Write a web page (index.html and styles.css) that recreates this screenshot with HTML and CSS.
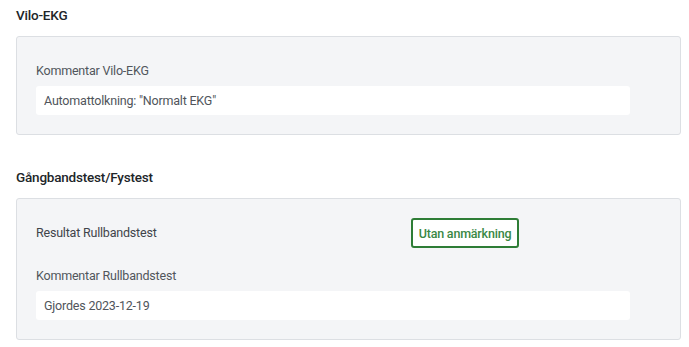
FILE: index.html
```html
<!DOCTYPE html>
<html lang="sv">
<head>
<meta charset="utf-8">
<link rel="stylesheet" href="styles.css">
</head>
<body>
<main class="page">
  <section class="section">
    <h2 class="section-title">Vilo-EKG</h2>
    <div class="panel panel-top">
      <div class="field">
        <div class="field-label">Kommentar Vilo-EKG</div>
        <div class="field-value">Automattolkning: "Normalt EKG"</div>
      </div>
    </div>
  </section>
  <section class="section section-second">
    <h2 class="section-title">Gångbandstest/Fystest</h2>
    <div class="panel">
      <div class="result-row">
        <div class="row-label">Resultat Rullbandstest</div>
        <div class="badge">Utan anmärkning</div>
      </div>
      <div class="field field-spaced">
        <div class="field-label">Kommentar Rullbandstest</div>
        <div class="field-value">Gjordes 2023-12-19</div>
      </div>
    </div>
  </section>
</main>
</body>
</html>
```
FILE: styles.css
```css
html, body {
  margin: 0;
  padding: 0;
  background: #ffffff;
}
body {
  font-family: Roboto, "Noto Sans", sans-serif;
  font-size: 12.5px;
  letter-spacing: -0.2px;
  color: #495057;
}
.page {
  padding: 5px 8px 0 16px;
}
.section-title {
  margin: 0 0 11px 0;
  font-size: 13.5px;
  font-weight: 500;
  line-height: 20px;
  color: #212529;
}
.section-second {
  margin-top: 32px;
}
.panel {
  background: #f4f5f7;
  border: 1px solid #dcdfe3;
  border-radius: 3px;
  padding: 19px 50px 19px 19px;
}
.panel-top {
  padding-top: 24px;
}
.field-label {
  line-height: 20px;
  color: #51565c;
  margin-bottom: 5px;
}
.field-value {
  background: #ffffff;
  border-radius: 3px;
  height: 29px;
  line-height: 29px;
  padding: 0 8px;
  color: #50555b;
}
.result-row {
  display: grid;
  grid-template-columns: 375px auto;
  align-items: center;
  justify-items: start;
}
.row-label {
  line-height: 20px;
  color: #3f444a;
}
.badge {
  box-sizing: border-box;
  height: 30px;
  width: 108px;
  border: 2px solid #2e7d36;
  border-radius: 3px;
  background: #ffffff;
  color: #3a8845;
  font-weight: 500;
  display: flex;
  align-items: center;
  justify-content: center;
}
.field-spaced {
  margin-top: 18px;
}
```
